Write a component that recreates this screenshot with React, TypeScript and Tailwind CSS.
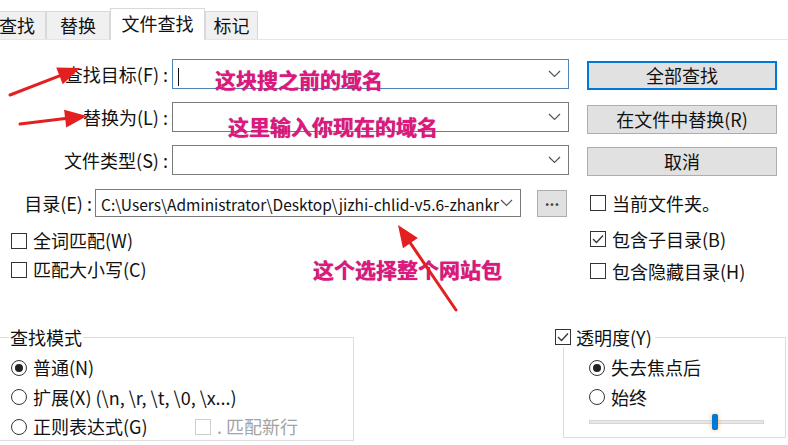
import type { ReactNode } from "react";

const tabs = [
  { label: "查找", w: "w-[58px]" },
  { label: "替换", w: "w-[64px]" },
  { label: "文件查找", w: "w-[95px]", active: true },
  { label: "标记", w: "w-[53px]" },
];

function CheckBox({ checked, disabled }: { checked?: boolean; disabled?: boolean }) {
  return (
    <span
      className={
        "w-[16px] h-[16px] shrink-0 bg-white flex items-center justify-center border " +
        (disabled ? "border-[#cfcfcf]" : "border-[#333333]")
      }
    >
      {checked && (
        <svg width="12" height="10" viewBox="0 0 12 10">
          <path d="M1 5 L4.5 8.5 L11 1.5" fill="none" stroke="#333" strokeWidth="1.3" />
        </svg>
      )}
    </span>
  );
}

function Radio({ checked }: { checked?: boolean }) {
  return (
    <span className="w-[16px] h-[16px] shrink-0 rounded-full border border-[#333333] bg-white flex items-center justify-center">
      {checked && <span className="w-[8px] h-[8px] rounded-full bg-[#222222]" />}
    </span>
  );
}

function Chevron() {
  return (
    <svg width="13" height="8" viewBox="0 0 13 8" className="shrink-0">
      <path d="M1 1 L6.5 6.5 L12 1" fill="none" stroke="#555" strokeWidth="1.2" />
    </svg>
  );
}

function Combo({ className, focused, children }: { className: string; focused?: boolean; children?: ReactNode }) {
  return (
    <div
      className={
        "flex items-center bg-white border pl-[5px] pr-[7px] " +
        (focused ? "border-[#4f86b8] " : "border-[#7a7a7a] ") +
        className
      }
    >
      <div className="flex-1 min-w-0 overflow-hidden whitespace-nowrap">{children}</div>
      <Chevron />
    </div>
  );
}

function Btn({ className, primary, children }: { className: string; primary?: boolean; children: ReactNode }) {
  return (
    <div
      className={
        "flex items-center justify-center bg-[#e1e1e1] " +
        (primary ? "border-2 border-[#0078d7] " : "border border-[#adadad] ") +
        className
      }
    >
      {children}
    </div>
  );
}

function Arrow({ x1, y1, x2, y2 }: { x1: number; y1: number; x2: number; y2: number }) {
  const dx = x2 - x1;
  const dy = y2 - y1;
  const len = Math.hypot(dx, dy);
  const ux = dx / len;
  const uy = dy / len;
  const bx = x2 - ux * 22;
  const by = y2 - uy * 22;
  const px = -uy * 9;
  const py = ux * 9;
  return (
    <g>
      <line x1={x1} y1={y1} x2={bx} y2={by} stroke="#e3201f" strokeWidth="3" strokeLinecap="round" />
      <polygon points={`${x2},${y2} ${bx + px},${by + py} ${bx - px},${by - py}`} fill="#e3201f" />
    </g>
  );
}

const note = "absolute leading-none text-[21px] font-bold text-[#e2167e] whitespace-nowrap [text-shadow:0_0_1px_#7b1f5e]";

export default function App() {
  return (
    <div className="relative w-[788px] h-[445px] overflow-hidden bg-white text-[#111] text-[18px] font-['Noto_Sans_CJK_SC','Noto_Sans',sans-serif]">
      {/* tab strip */}
      <div className="flex items-end h-[40px] border-b border-[#e5e5e5]">
        <div className="flex items-end -ml-[12px]">
          {tabs.map((t) => (
            <div
              key={t.label}
              className={
                "flex items-center justify-center border border-b-0 " +
                t.w +
                (t.active
                  ? " h-[32px] bg-white border-[#d9d9d9] -mb-px pb-[2px]"
                  : " h-[28px] bg-[#f0f0f0] border-[#d9d9d9]")
              }
            >
              {t.label}
            </div>
          ))}
        </div>
      </div>

      {/* search rows */}
      <div className="pt-[19px]">
        <div className="flex items-start h-[30px]">
          <div className="w-[172px] h-full flex items-center justify-end pr-[4px] whitespace-nowrap">查找目标(F) :</div>
          <Combo className="w-[397px] h-[30px]" focused>
            <span className="inline-block w-px h-[18px] bg-[#111] align-middle" />
          </Combo>
          <Btn className="ml-[18px] mt-[2px] w-[190px] h-[29px]" primary>
            全部查找
          </Btn>
        </div>
        <div className="flex items-start h-[30px] mt-[13px]">
          <div className="w-[172px] h-full flex items-center justify-end pr-[4px] whitespace-nowrap">替换为(L) :</div>
          <Combo className="w-[397px] h-[30px]" />
          <Btn className="ml-[18px] mt-[3px] w-[190px] h-[29px]">在文件中替换(R)</Btn>
        </div>
        <div className="flex items-start h-[30px] mt-[13px]">
          <div className="w-[172px] h-full flex items-center justify-end pr-[4px] whitespace-nowrap">文件类型(S) :</div>
          <Combo className="w-[397px] h-[30px]" />
          <Btn className="ml-[18px] mt-[2px] w-[190px] h-[29px]">取消</Btn>
        </div>
        <div className="flex items-center h-[28px] mt-[14px]">
          <div className="w-[95px] flex justify-end pr-[3px] whitespace-nowrap">目录(E) :</div>
          <Combo className="w-[426px] h-[28px]">
            <span className="text-[15.5px]">C:\Users\Administrator\Desktop\jizhi-chlid-v5.6-zhankr</span>
          </Combo>
          <Btn className="ml-[16px] w-[30px] h-[27px] text-[15px] font-bold text-[#444] pb-[5px]">...</Btn>
          <div className="ml-[23px] flex items-center gap-[6px] whitespace-nowrap">
            <CheckBox />
            当前文件夹。
          </div>
        </div>

        {/* options */}
        <div className="flex h-[110px]">
          <div className="w-[590px] pl-[11px] pt-[9px]">
            <div className="h-[29px] flex items-center gap-[6px]">
              <CheckBox />
              全词匹配(W)
            </div>
            <div className="h-[29px] flex items-center gap-[6px]">
              <CheckBox />
              匹配大小写(C)
            </div>
          </div>
          <div className="pt-[6px]">
            <div className="h-[32px] flex items-center gap-[6px]">
              <CheckBox checked />
              包含子目录(B)
            </div>
            <div className="h-[32px] flex items-center gap-[6px]">
              <CheckBox />
              包含隐藏目录(H)
            </div>
          </div>
        </div>

        {/* bottom groups */}
        <div className="flex items-start">
          <fieldset className="-ml-px w-[355px] h-[114px] border border-[#dcdcdc]">
            <legend className="ml-[9px] px-[1px] leading-[20px]">查找模式</legend>
            <div className="pl-[11px] pt-[6px]">
              <div className="h-[29.5px] flex items-center gap-[6px]">
                <Radio checked />
                普通(N)
              </div>
              <div className="h-[29.5px] flex items-center gap-[6px] whitespace-nowrap">
                <Radio />
                扩展(X) (\n, \r, \t, \0, \x...)
              </div>
              <div className="h-[29.5px] flex items-center">
                <div className="w-[184px] flex items-center gap-[6px]">
                  <Radio />
                  正则表达式(G)
                </div>
                <div className="flex items-center gap-[6px] text-[#a3a3a3]">
                  <CheckBox disabled />
                  . 匹配新行
                </div>
              </div>
            </div>
          </fieldset>
          <fieldset className="ml-[209px] w-[223px] h-[111px] border border-[#dcdcdc]">
            <legend className="-ml-[9px] pr-[3px] leading-[20px] flex items-center gap-[5px]">
              <CheckBox checked />
              透明度(Y)
            </legend>
            <div className="pl-[25px] pt-[6px]">
              <div className="h-[29.5px] flex items-center gap-[6px]">
                <Radio checked />
                失去焦点后
              </div>
              <div className="h-[29.5px] flex items-center gap-[6px]">
                <Radio />
                始终
              </div>
              <div className="h-[20px] w-[175px] flex items-center">
                <div className="relative w-full h-[4px] bg-[#e7e7e7] border border-[#d6d6d6]">
                  <div className="absolute left-[122px] -top-[7px] w-[6px] h-[16px] bg-[#0078d7] rounded-[2px] shadow-[0_0_4px_#f3b46a]" />
                </div>
              </div>
            </div>
          </fieldset>
        </div>
      </div>

      {/* annotations */}
      <div className={note + " left-[215px] top-[69px]"}>这块搜之前的域名</div>
      <div className={note + " left-[228px] top-[116px]"}>这里输入你现在的域名</div>
      <div className={note + " left-[313px] top-[259px]"}>这个选择整个网站包</div>
      <svg className="absolute inset-0 pointer-events-none" width="788" height="445">
        <Arrow x1={10} y1={95} x2={80} y2={68} />
        <Arrow x1={20} y1={124} x2={87} y2={116} />
        <Arrow x1={456} y1={310} x2={398} y2={225} />
      </svg>
    </div>
  );
}
